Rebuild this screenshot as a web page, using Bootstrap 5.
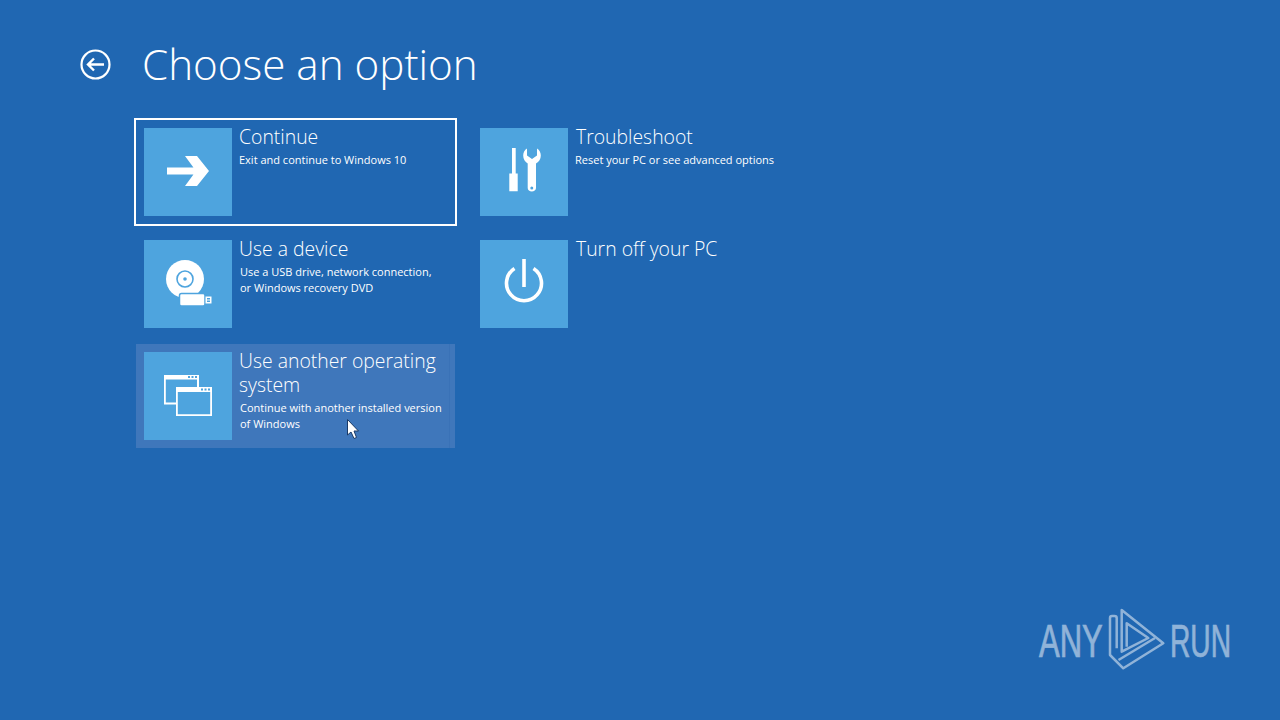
<!DOCTYPE html>
<html lang="en">
<head>
    <meta charset="UTF-8">
    <meta name="viewport" content="width=device-width, initial-scale=1.0">
    <title>Choose an option</title>
    <link rel="stylesheet" href="https://cdn.jsdelivr.net/npm/bootstrap@5.3.2/dist/css/bootstrap.min.css">
    <style>
        body { background: #2067b2; color: #fff; font-family: "Open Sans", "Liberation Sans", sans-serif; font-weight: 300; height: 720px; overflow: hidden; }
        .boot-page { position: relative; height: 720px; }
        .boot-header { padding: 37px 0 0 80px; height: 120px; }
        .boot-header h1 { font-size: 42.2px; font-weight: 300; line-height: 56px; margin: -1px 0 0 30px; }
        .boot-back { margin-top: 12px; }
        .boot-options { padding-left: 136px; gap: 17px; }
        .boot-col { width: 319px; gap: 8px; }
        .boot-option { height: 104px; padding: 8px; gap: 7px; }
        .boot-option.is-focus { outline: 2px solid #fff; }
        .boot-option.is-hover { background: linear-gradient(to right, #3f77bb 313px, #3a72b7 313px, #3a72b7 314px, #3f77bb 314px); }
        .boot-tile { width: 88px; height: 88px; background: #4ea4de; flex: none; }
        .boot-tile svg { display: block; }
        .boot-name { font-size: 19.4px; line-height: 24px; margin-top: -3px; }
        .boot-desc { font-size: 11px; line-height: 16px; font-weight: 400; margin-top: 3px; }
        .boot-nudge { padding-left: 1px; }
        .boot-cursor { position: absolute; left: 347px; top: 419px; }
        .boot-logo { position: absolute; left: 1030px; top: 600px; }
    </style>
</head>
<body>
<div class="boot-page">
    <div class="boot-header d-flex align-items-start">
        <svg class="boot-back" width="32" height="32" viewBox="0 0 32 32"><circle cx="15.5" cy="15.5" r="14" fill="none" stroke="#fff" stroke-width="2.2"/><path d="M8 15.500H24M14 9.500L8 15.500L14 21.500" fill="none" stroke="#fff" stroke-width="2.400"/></svg>
        <h1>Choose an option</h1>
    </div>
    <div class="boot-options d-flex">
        <div class="boot-col d-flex flex-column">
            <div class="boot-option is-focus d-flex">
                <div class="boot-tile">
                    <svg width="88" height="88" viewBox="0 0 88 88"><path fill="#fff" d="M23 39.500H53V46.500H23ZM41 28H53L65 43L53 58H41L52 43Z"/></svg>
                </div>
                <div>
                    <div class="boot-name">Continue</div>
                    <div class="boot-desc">Exit and continue to Windows 10</div>
                </div>
            </div>
            <div class="boot-option d-flex">
                <div class="boot-tile">
                    <svg width="88" height="88" viewBox="0 0 88 88"><circle cx="41" cy="39" r="19" fill="#fff"/><circle cx="41" cy="39" r="8" fill="none" stroke="#4ea4de" stroke-width="1.6"/><circle cx="41" cy="39" r="1.8" fill="#4ea4de"/><rect x="35.5" y="53.5" width="25.5" height="12.5" rx="2" fill="#fff" stroke="#4ea4de" stroke-width="1.5"/><path fill="#fff" d="M61.5 56.5H67.5V63.5H61.5Z"/><path fill="#4ea4de" d="M63 58H66V59.5H63ZM63 60.5H66V62H63Z"/></svg>
                </div>
                <div>
                    <div class="boot-name">Use a device</div>
                    <div class="boot-desc boot-nudge">Use a USB drive, network connection,<br>or Windows recovery DVD</div>
                </div>
            </div>
            <div class="boot-option is-hover d-flex">
                <div class="boot-tile">
                    <svg width="88" height="88" viewBox="0 0 88 88"><path fill="#fff" d="M20 23H55V35H53V27.500H21.800V50.500H32V52.500H20Z"/><path fill="#fff" d="M32 35H68V64H32ZM33.800 40V62.200H66.200V40Z"/><path fill="#4ea4de" d="M44 24H46V26H44ZM47.500 24H49.500V26H47.500ZM51 24H53V26H51ZM57 36.500H59V38.500H57ZM60.500 36.500H62.500V38.500H60.500ZM64 36.500H66V38.500H64Z"/></svg>
                </div>
                <div>
                    <div class="boot-name">Use another operating system</div>
                    <div class="boot-desc boot-nudge">Continue with another installed version of Windows</div>
                </div>
            </div>
        </div>
        <div class="boot-col d-flex flex-column">
            <div class="boot-option d-flex">
                <div class="boot-tile">
                    <svg width="88" height="88" viewBox="0 0 88 88"><path fill="#fff" d="M32 20H35.700V45.500H37.700V63.300H29.300V45.500H32Z"/><path fill="#fff" fill-rule="evenodd" d="M47 20.500V27.500L52 31L57 27.500V20.500C59.500 22 60.800 24.800 60.800 27.500C60.800 31 59 34 56 35.500V60C56 62 54 63.500 51.800 63.500C49.600 63.500 47.700 62 47.700 60V35.500C45 34 43.200 31 43.200 27.500C43.200 24.800 44.500 22 47 20.500ZM51.800 58.600A1.500 1.500 0 1 0 51.800 61.600A1.500 1.500 0 1 0 51.800 58.600Z"/></svg>
                </div>
                <div>
                    <div class="boot-name boot-nudge">Troubleshoot</div>
                    <div class="boot-desc">Reset your PC or see advanced options</div>
                </div>
            </div>
            <div class="boot-option d-flex">
                <div class="boot-tile">
                    <svg width="88" height="88" viewBox="0 0 88 88"><path fill="none" stroke="#fff" stroke-width="3.600" d="M34.500 28.500A17.500 17.500 0 1 0 53.500 28.500"/><path fill="none" stroke="#fff" stroke-width="3.600" d="M44 19V47"/></svg>
                </div>
                <div>
                    <div class="boot-name boot-nudge">Turn off your PC</div>
                </div>
            </div>
        </div>
    </div>
    <svg class="boot-cursor" width="14" height="21" viewBox="0 0 14 21"><path fill="#fff" stroke="#1a3a66" stroke-width="1" d="M.5.500V16L4 13L7 19.500L9.500 18.500L7 12H11.500Z"/></svg>
    <svg class="boot-logo" width="210" height="80" viewBox="0 0 210 80" opacity=".5">
        <g fill="#fff" stroke="#fff" stroke-width=".7" font-family="Liberation Sans" font-size="47"><text x="0" y="0" transform="translate(9 57) scale(.66 1)">ANY</text><text x="0" y="0" transform="translate(140 57) scale(.6 1)">RUN</text></g>
        <g fill="none" stroke="#fff" stroke-width="2.500" stroke-linejoin="round"><path d="M86.700 48.300V18Q86.700 16 84.500 16H82Q80 16 80 18V55L93.300 68.300L133.300 43.300L91.700 10V51.700L118.300 38L96.700 23.300V46.700"/><path d="M88.500 60L125 38"/></g>
    </svg>
</div>
<script src="https://cdn.jsdelivr.net/npm/bootstrap@5.3.2/dist/js/bootstrap.bundle.min.js"></script>
</body>
</html>
